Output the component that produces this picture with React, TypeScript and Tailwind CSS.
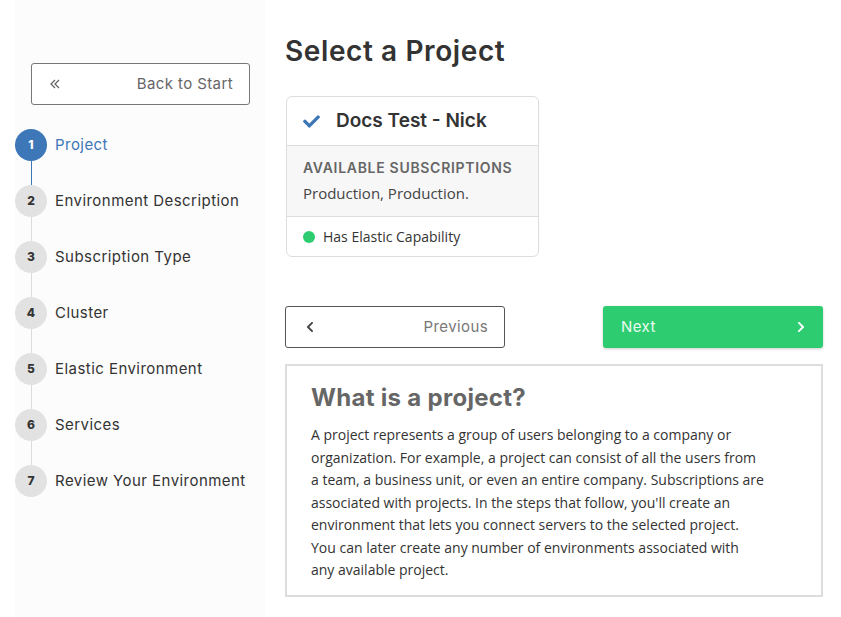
import { FaCheck, FaChevronLeft, FaChevronRight } from 'react-icons/fa';

const STEPS = [
  'Project',
  'Environment Description',
  'Subscription Type',
  'Cluster',
  'Elastic Environment',
  'Services',
  'Review Your Environment',
];

const heading = "font-['Inter',sans-serif]";
const body = "font-['Open_Sans',sans-serif]";

function DoubleLeft() {
  return (
    <svg width="12" height="12" viewBox="0 0 12 12" fill="none" stroke="#666" strokeWidth="1.3">
      <path d="M6 2 L2 6 L6 10" />
      <path d="M10 2 L6 6 L10 10" />
    </svg>
  );
}

function Sidebar() {
  return (
    <aside className={`ml-[15px] w-[250px] min-h-[617px] bg-[#fcfcfc] ${heading}`}>
      <button className="mt-[63px] ml-[16px] flex h-[42px] w-[219px] items-center justify-between rounded-[3px] border border-[#777] bg-white pl-[17px] pr-[16px] text-[15px] tracking-[0.4px] text-[#666]">
        <DoubleLeft />
        <span>Back to Start</span>
      </button>

      <ol className="mt-[24px]">
        {STEPS.map((step, i) => {
          const active = i === 0;
          const last = i === STEPS.length - 1;
          return (
            <li key={step} className="flex">
              <div className="flex w-[32px] flex-col items-center">
                <div
                  className={`flex h-[32px] w-[32px] items-center justify-center rounded-full text-[12px] font-extrabold ${
                    active ? 'bg-[#3d77b8] text-white' : 'bg-[#e2e2e2] text-[#333]'
                  }`}
                >
                  {i + 1}
                </div>
                {!last && <div className={`h-[24px] w-px ${active ? 'bg-[#3d77b8]' : 'bg-[#dcdcdc]'}`} />}
              </div>
              <span
                className={`ml-[8px] flex h-[32px] items-center text-[15px] tracking-[0.45px] ${
                  active ? 'text-[#3d77b8]' : 'text-[#333]'
                }`}
              >
                {step}
              </span>
            </li>
          );
        })}
      </ol>
    </aside>
  );
}

export default function App() {
  return (
    <div className="flex min-h-[617px] bg-white">
      <Sidebar />

      <main className="ml-[20px] w-[538px]">
        <h1 className={`mt-[33px] h-[36px] text-[28px] font-semibold leading-[36px] tracking-[0.6px] text-[#333] ${heading}`}>
          Select a Project
        </h1>

        <div className="mt-[27px] ml-px w-[253px] overflow-hidden rounded-[6px] border border-[#ddd] bg-white">
          <div className={`flex h-[48px] items-center gap-[16px] px-[16px] ${heading}`}>
            <FaCheck className="h-[17px] w-[17px] text-[#3d77b8]" />
            <span className="text-[19px] font-semibold text-[#333]">Docs Test - Nick</span>
          </div>
          <div className="h-[72px] border-y border-[#ddd] bg-[#f7f7f7] px-[16px] pt-[12px]">
            <div className={`text-[14px] font-semibold uppercase leading-[20px] tracking-[0.7px] text-[#666] ${heading}`}>
              Available Subscriptions
            </div>
            <div className={`mt-[4px] text-[15px] leading-[22px] text-[#444] ${body}`}>Production, Production.</div>
          </div>
          <div className={`flex h-[39px] items-center gap-[8px] px-[16px] text-[14px] text-[#333] ${body}`}>
            <span className="h-[12px] w-[12px] rounded-full bg-[#2ecc71]" />
            Has Elastic Capability
          </div>
        </div>

        <div className={`mt-[49px] flex justify-between ${heading}`}>
          <button className="flex h-[42px] w-[220px] items-center justify-between rounded-[3px] border border-[#555] bg-white pl-[18px] pr-[16px] text-[15px] tracking-[0.4px] text-[#777]">
            <FaChevronLeft className="h-[12px] w-[12px] text-[#444]" />
            <span>Previous</span>
          </button>
          <button className="flex h-[42px] w-[220px] items-center justify-between rounded-[3px] bg-[#2ecc71] pl-[18px] pr-[16px] text-[15px] tracking-[0.4px] text-[#e9fbef] shadow-[0_1px_3px_rgba(0,0,0,0.2)]">
            <span>Next</span>
            <FaChevronRight className="h-[12px] w-[12px] text-white" />
          </button>
        </div>

        <section className="mt-[16px] h-[233px] border-2 border-[#ddd] bg-white pl-[24px] pt-[17px]">
          <h2 className={`text-[24px] font-bold leading-[30px] tracking-[0.3px] text-[#666] ${heading}`}>What is a project?</h2>
          <p className={`mt-[11px] w-[454px] text-[14px] leading-[22.5px] text-[#333] ${body}`}>
            A project represents a group of users belonging to a company or organization. For example, a project can
            consist of all the users from a team, a business unit, or even an entire company. Subscriptions are
            associated with projects. In the steps that follow, you'll create an environment that lets you connect
            servers to the selected project. You can later create any number of environments associated with any
            available project.
          </p>
        </section>
      </main>
    </div>
  );
}
